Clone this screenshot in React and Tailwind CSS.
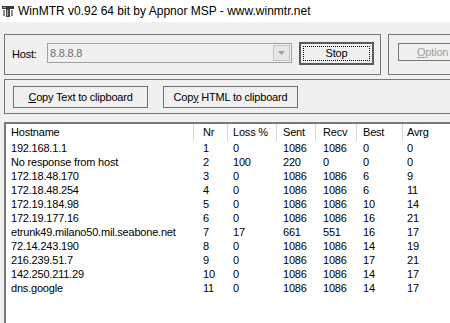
import React from "react"

const rows = [
  ["192.168.1.1", 1, 0, 1086, 1086, 0, 0],
  ["No response from host", 2, 100, 220, 0, 0, 0],
  ["172.18.48.170", 3, 0, 1086, 1086, 6, 9],
  ["172.18.48.254", 4, 0, 1086, 1086, 6, 11],
  ["172.19.184.98", 5, 0, 1086, 1086, 10, 14],
  ["172.19.177.16", 6, 0, 1086, 1086, 16, 21],
  ["etrunk49.milano50.mil.seabone.net", 7, 17, 661, 551, 16, 17],
  ["72.14.243.190", 8, 0, 1086, 1086, 14, 19],
  ["216.239.51.7", 9, 0, 1086, 1086, 17, 21],
  ["142.250.211.29", 10, 0, 1086, 1086, 14, 17],
  ["dns.google", 11, 0, 1086, 1086, 14, 17],
]

const headers = ["Hostname", "Nr", "Loss %", "Sent", "Recv", "Best", "Avrg"]

// column boxes follow the header separators
const cols = [
  "w-[188px] pl-[5px]",
  "w-[34px] pl-[9px]",
  "w-[49px] pl-[5px]",
  "w-[39px] pl-[6px]",
  "w-[41px] pl-[7px]",
  "w-[46px] pl-[6px]",
  "w-[60px] pl-[4px]",
]

function AppIcon() {
  return (
    <svg width="12" height="12" viewBox="0 0 12 12" className="shrink-0">
      <rect x="0" y="1" width="12" height="3" fill="#3a3a3a" />
      <rect x="1" y="2" width="3" height="1" fill="#9a9a9a" />
      <rect x="4" y="4" width="4" height="8" fill="#4a4a4a" />
      <rect x="1" y="5" width="2" height="6" fill="#8a8a8a" />
      <rect x="9" y="5" width="2" height="6" fill="#8a8a8a" />
      <rect x="5" y="5" width="1" height="6" fill="#a8a8a8" />
    </svg>
  )
}

function Button({ children, className = "" }) {
  return (
    <div className={`flex items-center justify-center h-[22px] border border-[#6f6f6f] bg-[#f0f0f0] ${className}`}>
      {children}
    </div>
  )
}

export default function App() {
  return (
    <div className="w-[450px] h-[323px] overflow-hidden flex flex-col bg-[#f0f0f0] text-black text-[11px] leading-none tracking-[-0.2px] font-['Liberation_Sans',Arial,sans-serif]">
      <div className="h-[22px] shrink-0 bg-white flex items-center pl-[2px] gap-[4px] tracking-normal">
        <AppIcon />
        <span className="text-[12px]">WinMTR v0.92 64 bit by Appnor MSP - www.winmtr.net</span>
      </div>

      <div className="flex shrink-0 mt-[12px] pl-[4px]">
        <div className="w-[377px] h-[41px] shrink-0 border border-[#777] flex items-start pl-[7px]">
          <span className="mt-[14px] w-[35px]">Host:</span>
          <div className="mt-[8px] w-[245px] h-[20px] border border-[#a0a0a0] bg-[#f0f0f0] flex items-center">
            <span className="flex-1 pl-[2px] text-[#6d6d6d]">8.8.8.8</span>
            <div className="w-[17px] h-[16px] mr-[1px] border border-[#c4c4c4] bg-[#e6e6e6] flex items-center justify-center">
              <svg width="7" height="4" viewBox="0 0 7 4">
                <path d="M0 0h7L3.5 4z" fill="#a0a0a0" />
              </svg>
            </div>
          </div>
          <div className="ml-[7px] mt-[7px] w-[75px] h-[23px] border-2 border-[#5a5a5a] bg-[#f0f0f0] p-[2px]">
            <div className="w-full h-full border border-dotted border-black flex items-center justify-center">Stop</div>
          </div>
        </div>
        <div className="ml-[7px] w-[80px] h-[41px] shrink-0 border border-[#777] pl-[9px] pt-[8px]">
          <div className="w-[80px] h-[18px] border border-[#7a7a7a] flex items-center pl-[18px] text-[#a0a0a0]">
            <span><span className="underline">O</span>ption</span>
          </div>
        </div>
      </div>

      <div className="shrink-0 mt-[4px] ml-[4px] w-[460px] h-[35px] border border-[#777] flex items-start pt-[6px] pl-[8px] gap-[15px]">
        <Button className="w-[135px]">
          <span><span className="underline">C</span>opy Text to clipboard</span>
        </Button>
        <Button className="w-[135px]">
          <span>Cop<span className="underline">y</span> HTML to clipboard</span>
        </Button>
      </div>

      <div className="flex-1 mt-[8px] ml-[4px] w-[460px] border-t-2 border-l-2 border-[#7a7a7a] bg-white">
        <div className="flex h-[17px] items-center">
          {headers.map((h, i) => (
            <div
              key={h}
              className={`${cols[i]} shrink-0 h-full flex items-center ${i < headers.length - 1 ? "border-r border-[#d5d5d5]" : ""}`}
            >
              {h}
            </div>
          ))}
        </div>
        {rows.map((r) => (
          <div key={r[1]} className="flex h-[14px] items-center">
            {r.map((v, i) => (
              <div key={i} className={`${cols[i]} shrink-0 whitespace-nowrap`}>
                {v}
              </div>
            ))}
          </div>
        ))}
      </div>
    </div>
  )
}
